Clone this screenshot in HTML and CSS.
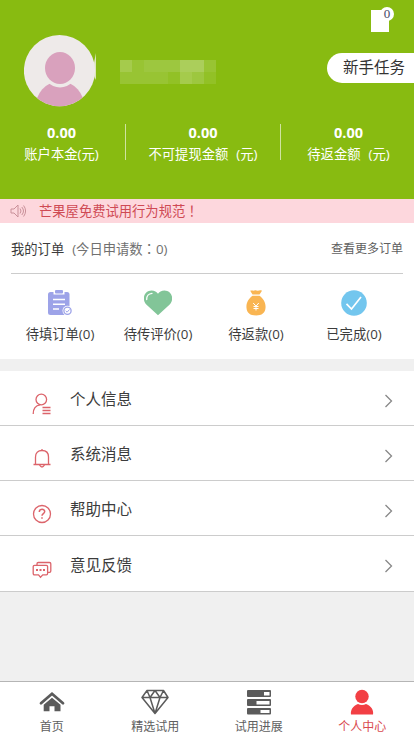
FILE: index.html
```
<!DOCTYPE html>
<html lang="zh-CN">
<head>
<meta charset="utf-8">
<meta name="viewport" content="width=device-width, initial-scale=1">
<title>个人中心</title>
<link rel="stylesheet" href="styles.css">
</head>
<body>
<div class="app">
  <header class="hero">
    <div class="note"><span class="note-badge">0</span></div>
    <div class="profile">
      <svg class="avatar" width="73" height="72" viewBox="0 0 73 72">
        <defs><clipPath id="face"><circle cx="35.5" cy="35.7" r="35.6"/></clipPath></defs>
        <path d="M72 18v27l-4-8z" fill="#dce5bd"/>
        <circle cx="35.5" cy="35.7" r="35.6" fill="#eeeae9"/>
        <g clip-path="url(#face)" fill="#d9a1bd">
          <ellipse cx="36" cy="74" rx="25" ry="28"/>
          <ellipse cx="36" cy="33" rx="18" ry="19.5" fill="#eeeae9"/>
          <ellipse cx="36" cy="33" rx="15" ry="16"/>
        </g>
      </svg>
      <div class="masked">
        <i class="m4"></i><i class="m2"></i><i class="m3"></i><i class="m3"></i><i class="m3"></i><i class="m5"></i><i class="m5"></i><i class="m2"></i>
        <i class="m2"></i><i class="m2"></i><i class="m2"></i><i class="m2"></i><i class="m1"></i><i class="m4"></i><i class="m3"></i><i class="m1"></i>
      </div>
      <a class="task">新手任务</a>
    </div>
    <div class="stats">
      <div class="stat"><b>0.00</b><span>账户本金(元)</span></div>
      <div class="stat"><b>0.00</b><span>不可提现金额<em>(元)</em></span></div>
      <div class="stat"><b>0.00</b><span>待返金额<em>(元)</em></span></div>
    </div>
  </header>

  <div class="notice">
    <svg width="17" height="14" viewBox="0 0 17 14" fill="none" stroke="#c99099" stroke-width="1"><path d="M1 5h3l4-4v12L4 9H1zM10 4.500q2 2.500 0 5M11.800 3q3.400 4 0 8M13.600 1.500q4 5.500 0 11"/></svg>
    <span>芒果屋免费试用行为规范<i class="mark" lang="zh-TW">！</i></span>
  </div>

  <section class="orders">
    <div class="orders-head">
      <span class="title">我的订单</span><span class="count">(今日申请数<i class="mark" lang="zh-TW">：</i>0)</span><a class="more">查看更多订单</a>
    </div>
    <div class="order-grid">
      <div class="order">
        <svg width="26" height="26" viewBox="0 0 26 26"><rect x="1" y="2" width="21.500" height="23" rx="2.500" fill="#9da3e8"/><path d="M6.500 0v4.500h11V0" fill="#fff"/><rect x="8" y="0" width="8" height="3.500" rx="1" fill="#9da3e8"/><path d="M6 9.500h12M6 14.200h12M6 19h6" stroke="#fff" stroke-width="1.500"/><circle cx="20.500" cy="20.800" r="5" fill="#fff"/><circle cx="20.500" cy="20.800" r="3.600" fill="#fff" stroke="#9da3e8" stroke-width="1.300"/><path d="M18.700 20.800l1.400 1.400 2.400-2.700" fill="none" stroke="#9da3e8"/></svg>
        <span>待填订单(0)</span>
      </div>
      <div class="order">
        <svg width="28" height="26" viewBox="0 0 28 26"><path d="M14 25.300L2.300 14.500C-3 8.500 1 .5 7.500.5c3 0 5.300 1.500 6.500 3.300C15.200 2 17.500.5 20.500.5 27 .5 31 8.500 25.700 14.500z" fill="#82c598"/><path d="M2.700 9.500C2.500 6 4.800 3.600 8 3.300" fill="none" stroke="#fff" stroke-width="1.300" stroke-linecap="round"/></svg>
        <span>待传评价(0)</span>
      </div>
      <div class="order">
        <svg width="20" height="26" viewBox="0 0 20 26"><path d="M4.200.8c2-.8 3 .3 4.200-.2 1.500-.7 2 .1 3.300.1 1.500 0 2.300-.9 4.300.1L13.500 4.500h-7zM6.500 5.700h7C17.500 8.500 20 12.800 19.500 18c-.4 5-3.500 7.400-9.500 7.400S.9 23 .5 18C0 12.800 2.500 8.500 6.500 5.700z" fill="#f9b552"/><path d="M7.200 13l2.800 3.200 2.800-3.200M10 16v4.500M7.500 16.500h5M7.500 18.500h5" fill="none" stroke="#fff" stroke-width="1"/></svg>
        <span>待返款(0)</span>
      </div>
      <div class="order">
        <svg width="26" height="26" viewBox="0 0 26 26"><circle cx="13" cy="13" r="12.800" fill="#73c6ee"/><path d="M5.500 13.800l5 5.200L20 7" fill="none" stroke="#fff" stroke-width="1.700"/></svg>
        <span>已完成(0)</span>
      </div>
    </div>
  </section>

  <nav class="menu">
    <a class="row">
      <svg class="ico" width="20" height="22" viewBox="0 0 20 22"><circle cx="9.300" cy="6.500" r="5.300"/><path d="M1.200 21c0-5 2.500-8.700 7-9.200M10.500 14.500h8M10.500 17.500h8M10.500 20.500h8"/></svg>
      <span>个人信息</span><svg class="arrow" width="9" height="14" viewBox="0 0 9 14"><path d="M1.500 1L7.500 7l-6 6"/></svg>
    </a>
    <a class="row">
      <svg class="ico" width="20" height="22" viewBox="0 0 20 22"><path d="M1.500 16.500h17M3.500 16.500V9c0-4 2.500-6.500 6.500-6.500s6.500 2.500 6.500 6.500v7.500M7.500 17q2.500 4 5 0M10 1v2"/></svg>
      <span>系统消息</span><svg class="arrow" width="9" height="14" viewBox="0 0 9 14"><path d="M1.500 1L7.500 7l-6 6"/></svg>
    </a>
    <a class="row">
      <svg class="ico" width="20" height="22" viewBox="0 0 20 22"><circle cx="10" cy="11" r="8.500"/><path d="M7.300 9c0-3.600 5.400-3.600 5.400-.4 0 2-2.700 2-2.700 4.200M10 14.200v1.600" stroke-width="1.500"/></svg>
      <span>帮助中心</span><svg class="arrow" width="9" height="14" viewBox="0 0 9 14"><path d="M1.500 1L7.500 7l-6 6"/></svg>
    </a>
    <a class="row">
      <svg class="ico" width="20" height="22" viewBox="0 0 20 22"><path d="M5 6V4.800q0-1.300 1.300-1.300h11.200q1.300 0 1.300 1.300V12q0 1.300-1.300 1.300H16M2.500 6.300h11.800q1.300 0 1.300 1.300v7q0 1.300-1.300 1.300h-3.500L8.500 18.200l-2-2.300h-4q-1.300 0-1.300-1.300v-7q0-1.300 1.300-1.300z"/><path d="M4 11h2M7.500 11h2M11 11h2" stroke-width="1.800"/></svg>
      <span>意见反馈</span><svg class="arrow" width="9" height="14" viewBox="0 0 9 14"><path d="M1.500 1L7.500 7l-6 6"/></svg>
    </a>
  </nav>

  <footer class="tabs">
    <a class="tab">
      <svg width="26" height="26" viewBox="0 0 26 26"><path d="M2 14.200L13 4.800l11 9.400" fill="none" stroke="#5b5b5b" stroke-width="2.800" stroke-linecap="round"/><path d="M4.700 15.800L13 8.800l8.500 7v6.400h-6v-5h-5v5H4.700z" fill="#5b5b5b"/></svg>
      <span>首页</span>
    </a>
    <a class="tab">
      <svg width="28" height="26" viewBox="0 0 28 26" fill="none" stroke="#5b5b5b" stroke-width="1.500" stroke-linejoin="round"><path d="M6 1.500h16.500l4.500 7L14 24.500 1 8.500zM1 8.500h26M6 1.500l3 7 5-7 5 7 3.500-7M9 8.500l5 16 5-16"/></svg>
      <span>精选试用</span>
    </a>
    <a class="tab">
      <svg width="26" height="26" viewBox="0 0 26 26"><g fill="#5b5b5b"><rect x="1" y="1" width="24" height="7" rx="1"/><rect x="1" y="10" width="24" height="7" rx="1"/><rect x="1" y="19" width="24" height="6.500" rx="1"/></g><path d="M18 3h5.500v3.500H18zM10.500 12h13v3.500h-13zM14.500 21h9v3h-9z" fill="#fff"/></svg>
      <span>试用进展</span>
    </a>
    <a class="tab active">
      <svg width="26" height="26" viewBox="0 0 26 26" fill="#f23f44"><ellipse cx="13" cy="7.500" rx="6.700" ry="6.800"/><path d="M2 25.500c-.8-4 2-9 7-10.500q4 2 8 0c5 1.500 8 6.500 7 10.500z"/></svg>
      <span>个人中心</span>
    </a>
  </footer>
</div>
</body>
</html>
```

FILE: styles.css
```
* { box-sizing: border-box; }

body {
  margin: 0;
  background: #f0f0f0;
  color: #3c3c3c;
  font-family: "Open Sans", "Noto Sans CJK SC", sans-serif;
  font-size: 13.3px;
  line-height: 18px;
  white-space: nowrap;
}

svg { display: block; flex: none; }

.mark {
  font-family: "Noto Sans CJK TC", sans-serif;
  font-style: normal;
}

.app {
  display: flex;
  flex-direction: column;
  height: 736px;
  overflow: hidden;
}

.hero {
  flex: none;
  height: 199px;
  padding-top: 10px;
  background: #88bb11;
  color: #fff;
}

.note {
  position: relative;
  width: 18px;
  height: 22px;
  margin-left: 371px;
  background: #fff;
}

.note-badge {
  position: absolute;
  top: -3px;
  left: 9px;
  width: 14px;
  height: 14px;
  border-radius: 50%;
  background: #fff;
  color: #444466;
  font-family: "Liberation Serif", serif;
  font-size: 13px;
  line-height: 14px;
  text-align: center;
}

.profile {
  display: flex;
  align-items: flex-start;
  height: 92px;
  padding: 3px 0 0 24px;
}

.masked {
  display: grid;
  grid-template-columns: repeat(8, 12px);
  grid-auto-rows: 12px;
  margin: 25px 0 0 23px;
}

.m1 { background: #92c126; }
.m2 { background: #98c433; }
.m3 { background: #9dc73f; }
.m4 { background: #a5cb4c; }
.m5 { background: #abce5b; }

.task {
  width: 87px;
  height: 30px;
  margin: 18px 0 0 auto;
  padding-left: 16px;
  border-radius: 15px 0 0 15px;
  background: #fff;
  color: #333;
  font-size: 15.5px;
  line-height: 29px;
}

.stats {
  display: grid;
  grid-template-columns: 125px 155px 134px;
  grid-template-rows: 36px;
}

.stat {
  display: flex;
  flex-direction: column;
  align-items: center;
}

.stat + .stat { border-left: 1px solid #cfe3a0; }
.stat b { font-size: 14.5px; line-height: 18px; }
.stat span { margin-top: 3px; }
.stat em { margin-left: 8px; font-style: normal; }
.stat:first-child { padding-right: 2px; }
.stat:last-child { padding-left: 2px; }

.notice {
  display: flex;
  flex: none;
  align-items: center;
  gap: 12px;
  height: 24px;
  padding-left: 10px;
  background: #fdd7dd;
  color: #cf4a54;
}

.orders {
  flex: none;
  height: 136px;
  padding: 0 11px;
  background: #fff;
}

.orders-head {
  display: flex;
  align-items: center;
  height: 51px;
  padding-top: 2px;
  border-bottom: 1px solid #ccc;
}

.count { margin-left: 8px; color: #707070; }
.more { margin-left: auto; color: #606060; font-size: 12px; }

.order-grid {
  display: grid;
  grid-template-columns: repeat(4, 98px);
  padding-top: 16px;
}

.order {
  display: flex;
  flex-direction: column;
  align-items: center;
  gap: 9px;
}

.menu {
  flex: none;
  margin-top: 12px;
  background: #fff;
}

.row {
  display: flex;
  align-items: center;
  height: 55px;
  padding: 0 21px 0 32px;
  border-bottom: 1px solid #ccc;
  font-size: 15.5px;
}

.row:last-child { height: 56px; }
.row span { margin: 2px 0 0 18px; }

.ico {
  margin-top: 12px;
  fill: none;
  stroke: #dc646b;
  stroke-width: 1.3;
}

.arrow {
  margin: 5px 0 0 auto;
  fill: none;
  stroke: #888;
  stroke-width: 1.3;
}

.tabs {
  display: grid;
  grid-template-columns: repeat(4, 1fr);
  flex: none;
  height: 55px;
  margin-top: auto;
  border-top: 1px solid #b5b5b5;
  background: #fff;
}

.tab {
  display: flex;
  flex-direction: column;
  align-items: center;
  padding-top: 7px;
  color: #606060;
  font-size: 12px;
}

.tab span { margin-top: 3px; }
.tab.active { color: #d94a50; }
```
